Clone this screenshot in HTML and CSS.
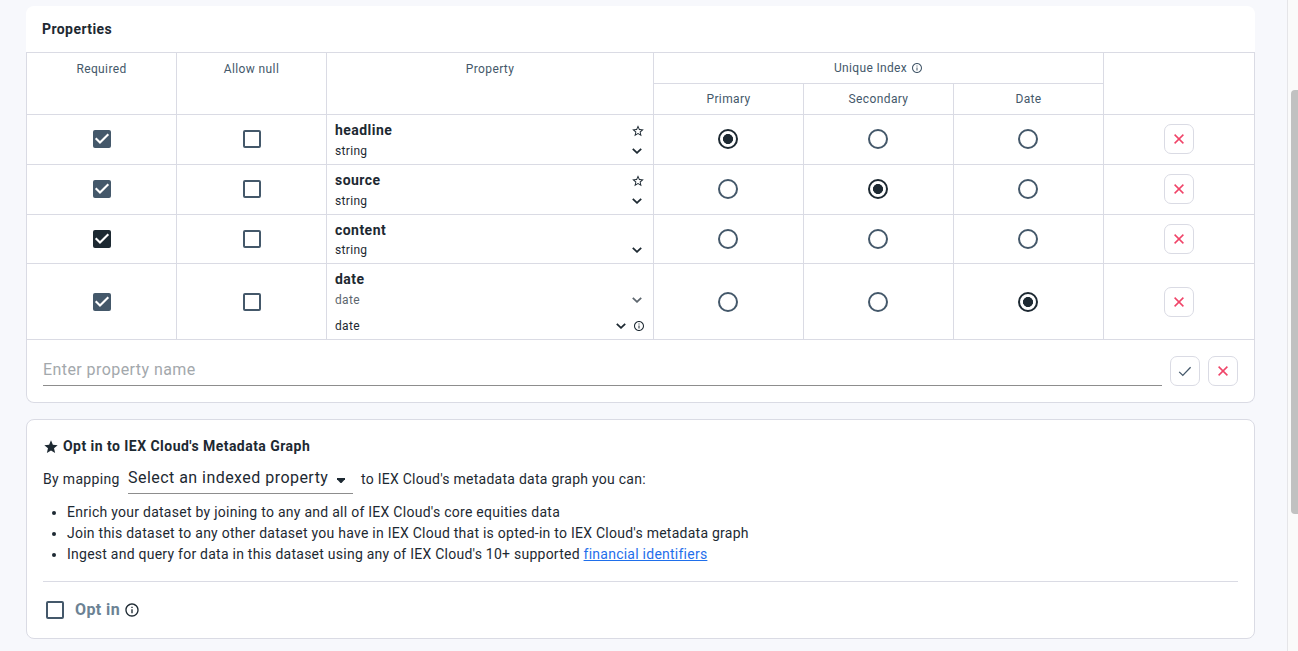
FILE: index.html
```
<!DOCTYPE html>
<html lang="en">
<head>
<meta charset="utf-8">
<title>Dataset properties</title>
<link rel="stylesheet" href="styles.css">
</head>
<body>
<svg class="sprite" width="0" height="0">
  <symbol id="check" viewBox="0 0 18 18"><path d="M2.7 8.3 7 12.6 15.3 4.3" fill="none" stroke="currentColor" stroke-width="2.1"/></symbol>
  <symbol id="tick" viewBox="0 0 14 14"><path d="M1.2 7.9 4.8 11.4 12.6 3.3" fill="none" stroke="currentColor" stroke-width="1.3"/></symbol>
  <symbol id="cross" viewBox="0 0 10 10"><path d="M.6.6 9.4 9.4M9.4.6.6 9.4" fill="none" stroke="currentColor" stroke-width="1.5"/></symbol>
  <symbol id="chevron" viewBox="0 0 10 6"><path d="M.8.8 5 4.8 9.2.8" fill="none" stroke="currentColor" stroke-width="1.8"/></symbol>
  <symbol id="star" viewBox="0 0 24 24"><path d="M22 9.24l-7.19-.62L12 2 9.19 8.63 2 9.24l5.46 4.73L5.82 21 12 17.27 18.18 21l-1.63-7.03L22 9.24zM12 15.4l-3.76 2.27 1-4.28-3.32-2.88 4.38-.38L12 6.1l1.71 4.04 4.38.38-3.32 2.88 1 4.28L12 15.4z" fill="currentColor"/></symbol>
  <symbol id="star-full" viewBox="0 0 24 24"><path d="M12 17.27 18.18 21l-1.64-7.03L22 9.24l-7.19-.61L12 2 9.19 8.63 2 9.24l5.46 4.73L5.82 21z" fill="currentColor"/></symbol>
  <symbol id="info" viewBox="0 0 24 24"><path d="M11 7h2v2h-2zm0 4h2v6h-2zm1-9C6.48 2 2 6.48 2 12s4.48 10 10 10 10-4.48 10-10S17.52 2 12 2zm0 18c-4.41 0-8-3.59-8-8s3.59-8 8-8 8 3.59 8 8-3.59 8-8 8z" fill="currentColor"/></symbol>
</svg>
<div class="page">
  <main class="content">
    <section class="properties">
      <h2 class="title">Properties</h2>
      <div class="grid">
        <div class="cell head tall">Required</div>
        <div class="cell head tall">Allow null</div>
        <div class="cell head tall">Property</div>
        <div class="cell head group"><span class="t-unique">Unique Index</span><svg class="info-sm"><use href="#info"/></svg></div>
        <div class="cell head tall"></div>
        <div class="cell head sub">Primary</div>
        <div class="cell head sub">Secondary</div>
        <div class="cell head sub">Date</div>

        <div class="cell pick"><span class="box on"><svg><use href="#check"/></svg></span></div>
        <div class="cell pick"><span class="box"></span></div>
        <div class="cell prop">
          <div class="line name"><b>headline</b><svg class="star"><use href="#star"/></svg></div>
          <div class="line type"><span>string</span><svg class="chev"><use href="#chevron"/></svg></div>
        </div>
        <div class="cell pick"><span class="radio on"></span></div>
        <div class="cell pick"><span class="radio"></span></div>
        <div class="cell pick"><span class="radio"></span></div>
        <div class="cell act"><button class="btn del"><svg><use href="#cross"/></svg></button></div>

        <div class="cell pick"><span class="box on"><svg><use href="#check"/></svg></span></div>
        <div class="cell pick"><span class="box"></span></div>
        <div class="cell prop">
          <div class="line name"><b>source</b><svg class="star"><use href="#star"/></svg></div>
          <div class="line type"><span>string</span><svg class="chev"><use href="#chevron"/></svg></div>
        </div>
        <div class="cell pick"><span class="radio"></span></div>
        <div class="cell pick"><span class="radio on"></span></div>
        <div class="cell pick"><span class="radio"></span></div>
        <div class="cell act"><button class="btn del"><svg><use href="#cross"/></svg></button></div>

        <div class="cell pick even"><span class="box on dark"><svg><use href="#check"/></svg></span></div>
        <div class="cell pick even"><span class="box"></span></div>
        <div class="cell prop">
          <div class="line name short"><b>content</b></div>
          <div class="line type"><span>string</span><svg class="chev"><use href="#chevron"/></svg></div>
        </div>
        <div class="cell pick even"><span class="radio"></span></div>
        <div class="cell pick even"><span class="radio"></span></div>
        <div class="cell pick even"><span class="radio"></span></div>
        <div class="cell act even"><button class="btn del"><svg><use href="#cross"/></svg></button></div>

        <div class="cell pick low"><span class="box on"><svg><use href="#check"/></svg></span></div>
        <div class="cell pick low"><span class="box"></span></div>
        <div class="cell prop">
          <div class="line name"><b>date</b></div>
          <div class="line type muted"><span>date</span><svg class="chev"><use href="#chevron"/></svg></div>
          <div class="line type second"><span>date</span><svg class="chev"><use href="#chevron"/></svg><svg class="info-sm"><use href="#info"/></svg></div>
        </div>
        <div class="cell pick low"><span class="radio"></span></div>
        <div class="cell pick low"><span class="radio"></span></div>
        <div class="cell pick low"><span class="radio on"></span></div>
        <div class="cell act low"><button class="btn del"><svg><use href="#cross"/></svg></button></div>
      </div>
      <div class="adder">
        <div class="field"><span>Enter property name</span></div>
        <button class="btn ok"><svg><use href="#tick"/></svg></button>
        <button class="btn del"><svg><use href="#cross"/></svg></button>
      </div>
    </section>

    <section class="graph">
      <h3 class="graph-title"><svg><use href="#star-full"/></svg><span>Opt in to IEX Cloud's Metadata Graph</span></h3>
      <div class="mapping">
        <span class="t-by">By mapping</span>
        <div class="select"><span>Select an indexed property</span><i class="caret"></i></div>
        <span class="t-to">to IEX Cloud's metadata data graph you can:</span>
      </div>
      <ul class="list">
        <li>Enrich your dataset by joining to any and all of IEX Cloud's core equities data</li>
        <li class="t-join">Join this dataset to any other dataset you have in IEX Cloud that is opted-in to IEX Cloud's metadata graph</li>
        <li class="t-ingest">Ingest and query for data in this dataset using any of IEX Cloud's 10+ supported <a>financial identifiers</a></li>
      </ul>
      <div class="optin"><span class="box"></span><b>Opt in</b><svg><use href="#info"/></svg></div>
    </section>
  </main>
  <aside class="scroll"><div class="thumb"></div></aside>
</div>
</body>
</html>
```
FILE: styles.css
```
* { box-sizing: border-box; }
body {
  margin: 0;
  height: 651px;
  overflow: hidden;
  background: #f7f8fc;
  color: #1d2932;
  font-family: Roboto, "Liberation Sans", sans-serif;
  font-size: 14px;
}
h2, h3, ul { margin: 0; padding: 0; }
svg { display: block; flex: none; }
.sprite { position: absolute; }
.page { display: flex; height: 651px; }
.content { flex: 1; padding: 6px 32px 0 26px; }

.properties { background: #fff; border-radius: 8px; }
.title {
  height: 46px;
  padding-left: 16px;
  font-size: 14px;
  font-weight: 700;
  line-height: 46px;
  letter-spacing: .42px;
}
.grid {
  display: grid;
  grid-template-columns: 150px 150px 327px 150px 150px 150px 151px;
  grid-template-rows: 31px 31px 50px 50px 49px 76px;
  border-top: 1px solid #dadbe4;
  border-left: 1px solid #dadbe4;
}
.cell { border-right: 1px solid #dadbe4; border-bottom: 1px solid #dadbe4; }
.head {
  display: flex;
  justify-content: center;
  color: #44586a;
  font-size: 12px;
  line-height: 31px;
  letter-spacing: .38px;
}
.tall { grid-row: span 2; line-height: 33px; }
.group { grid-column: span 3; align-items: center; gap: 4px; }
.t-unique { letter-spacing: .33px; }
.sub { line-height: 30px; }
.info-sm { width: 12px; height: 12px; }

.pick { display: flex; align-items: center; justify-content: center; padding: 0 0 1px 1px; }
.pick .radio { margin-left: -2px; }
.act { display: flex; align-items: center; justify-content: center; padding-bottom: 1px; }
.even { padding-bottom: 0; }
.low { padding-bottom: 0; padding-top: 1px; }
.box {
  display: block;
  width: 18px;
  height: 18px;
  border: 2px solid #44586a;
  border-radius: 2px;
}
.box.on { border: 0; background: #44586a; color: #fff; }
.box.dark { background: #1d2932; }
.box svg { width: 18px; height: 18px; }
.radio {
  display: block;
  width: 20px;
  height: 20px;
  border: 2px solid #44586a;
  border-radius: 50%;
}
.radio.on {
  border-color: #1d2932;
  background: radial-gradient(circle, #1d2932 4.7px, transparent 5.3px);
}
.btn {
  display: flex;
  align-items: center;
  justify-content: center;
  width: 30px;
  height: 30px;
  padding: 0;
  border: 1px solid #dadbe4;
  border-radius: 7px;
  background: #fff;
}
.del { color: #f04468; }
.del svg { width: 10px; height: 10px; }
.ok { color: #44586a; }
.ok svg { width: 14px; height: 14px; }

.prop { padding: 5px 8px 0; }
.line { display: flex; align-items: center; justify-content: space-between; }
.name { height: 21px; font-size: 14px; letter-spacing: .46px; }
.name b { height: 21px; line-height: 20px; }
.name.short { height: 20px; }
.name.short b { height: 20px; }
.star { width: 14px; height: 14px; }
.type { height: 20px; padding-right: 3px; font-size: 12px; letter-spacing: .32px; }
.chev { width: 10px; height: 6px; }
.muted { color: #5d666e; }
.second { height: 32px; padding-right: 0; }
.second .chev { margin: 0 7px 0 auto; }

.adder {
  display: flex;
  height: 63px;
  padding: 16px 16px 0;
  border: 1px solid #dadbe4;
  border-top: 0;
  border-radius: 0 0 8px 8px;
}
.field {
  flex: 1;
  height: 30px;
  margin-right: 8px;
  border-bottom: 1px solid #8d8d8d;
  color: #a3a8ac;
  font-size: 16px;
  line-height: 28px;
  letter-spacing: .43px;
}
.adder .ok { margin-right: 8px; }

.graph {
  height: 220px;
  margin-top: 16px;
  padding: 16px 16px 0;
  border: 1px solid #dadbe4;
  border-radius: 8px;
  background: #fff;
}
.graph-title { display: flex; align-items: center; height: 21px; gap: 4px; font-size: 14px; font-weight: 700; letter-spacing: .46px; }
.graph-title span { height: 21px; line-height: 20px; }
.graph-title svg { width: 16px; height: 16px; }
.mapping { display: flex; height: 37px; line-height: 44px; white-space: nowrap; }
.t-by { width: 85px; letter-spacing: .33px; }
.t-to { letter-spacing: .26px; }
.select {
  display: flex;
  width: 225px;
  margin-right: 8px;
  border-bottom: 1px solid #8d8d8d;
  font-size: 16px;
  line-height: 42px;
  letter-spacing: .46px;
}
.select span { width: 209px; }
.caret { width: 8px; height: 5px; margin-top: 21px; background: #1d2932; clip-path: polygon(0 0, 100% 0, 100% 25%, 56% 100%, 44% 100%, 0 25%); }
.list { margin-top: 8px; padding-left: 24px; line-height: 21px; letter-spacing: .265px; white-space: nowrap; }
.t-join { letter-spacing: .25px; }
.t-ingest { letter-spacing: .245px; }
.list a { color: #1f6feb; text-decoration: underline; }
.optin {
  display: flex;
  align-items: center;
  height: 57px;
  margin-top: 16px;
  padding-left: 3px;
  border-top: 1px solid #dadbe4;
}
.optin b { width: 49px; height: 21px; margin-left: 11px; color: #6c8294; font-size: 16px; line-height: 19px; letter-spacing: .42px; }
.optin svg { width: 16px; height: 16px; }

.scroll { width: 11px; padding: 90px 0 0 3px; border-left: 1px solid #e5e5e8; background: #fafafa; }
.thumb { height: 424px; border-radius: 4px 0 0 4px; background: #c1c1c1; }
```
